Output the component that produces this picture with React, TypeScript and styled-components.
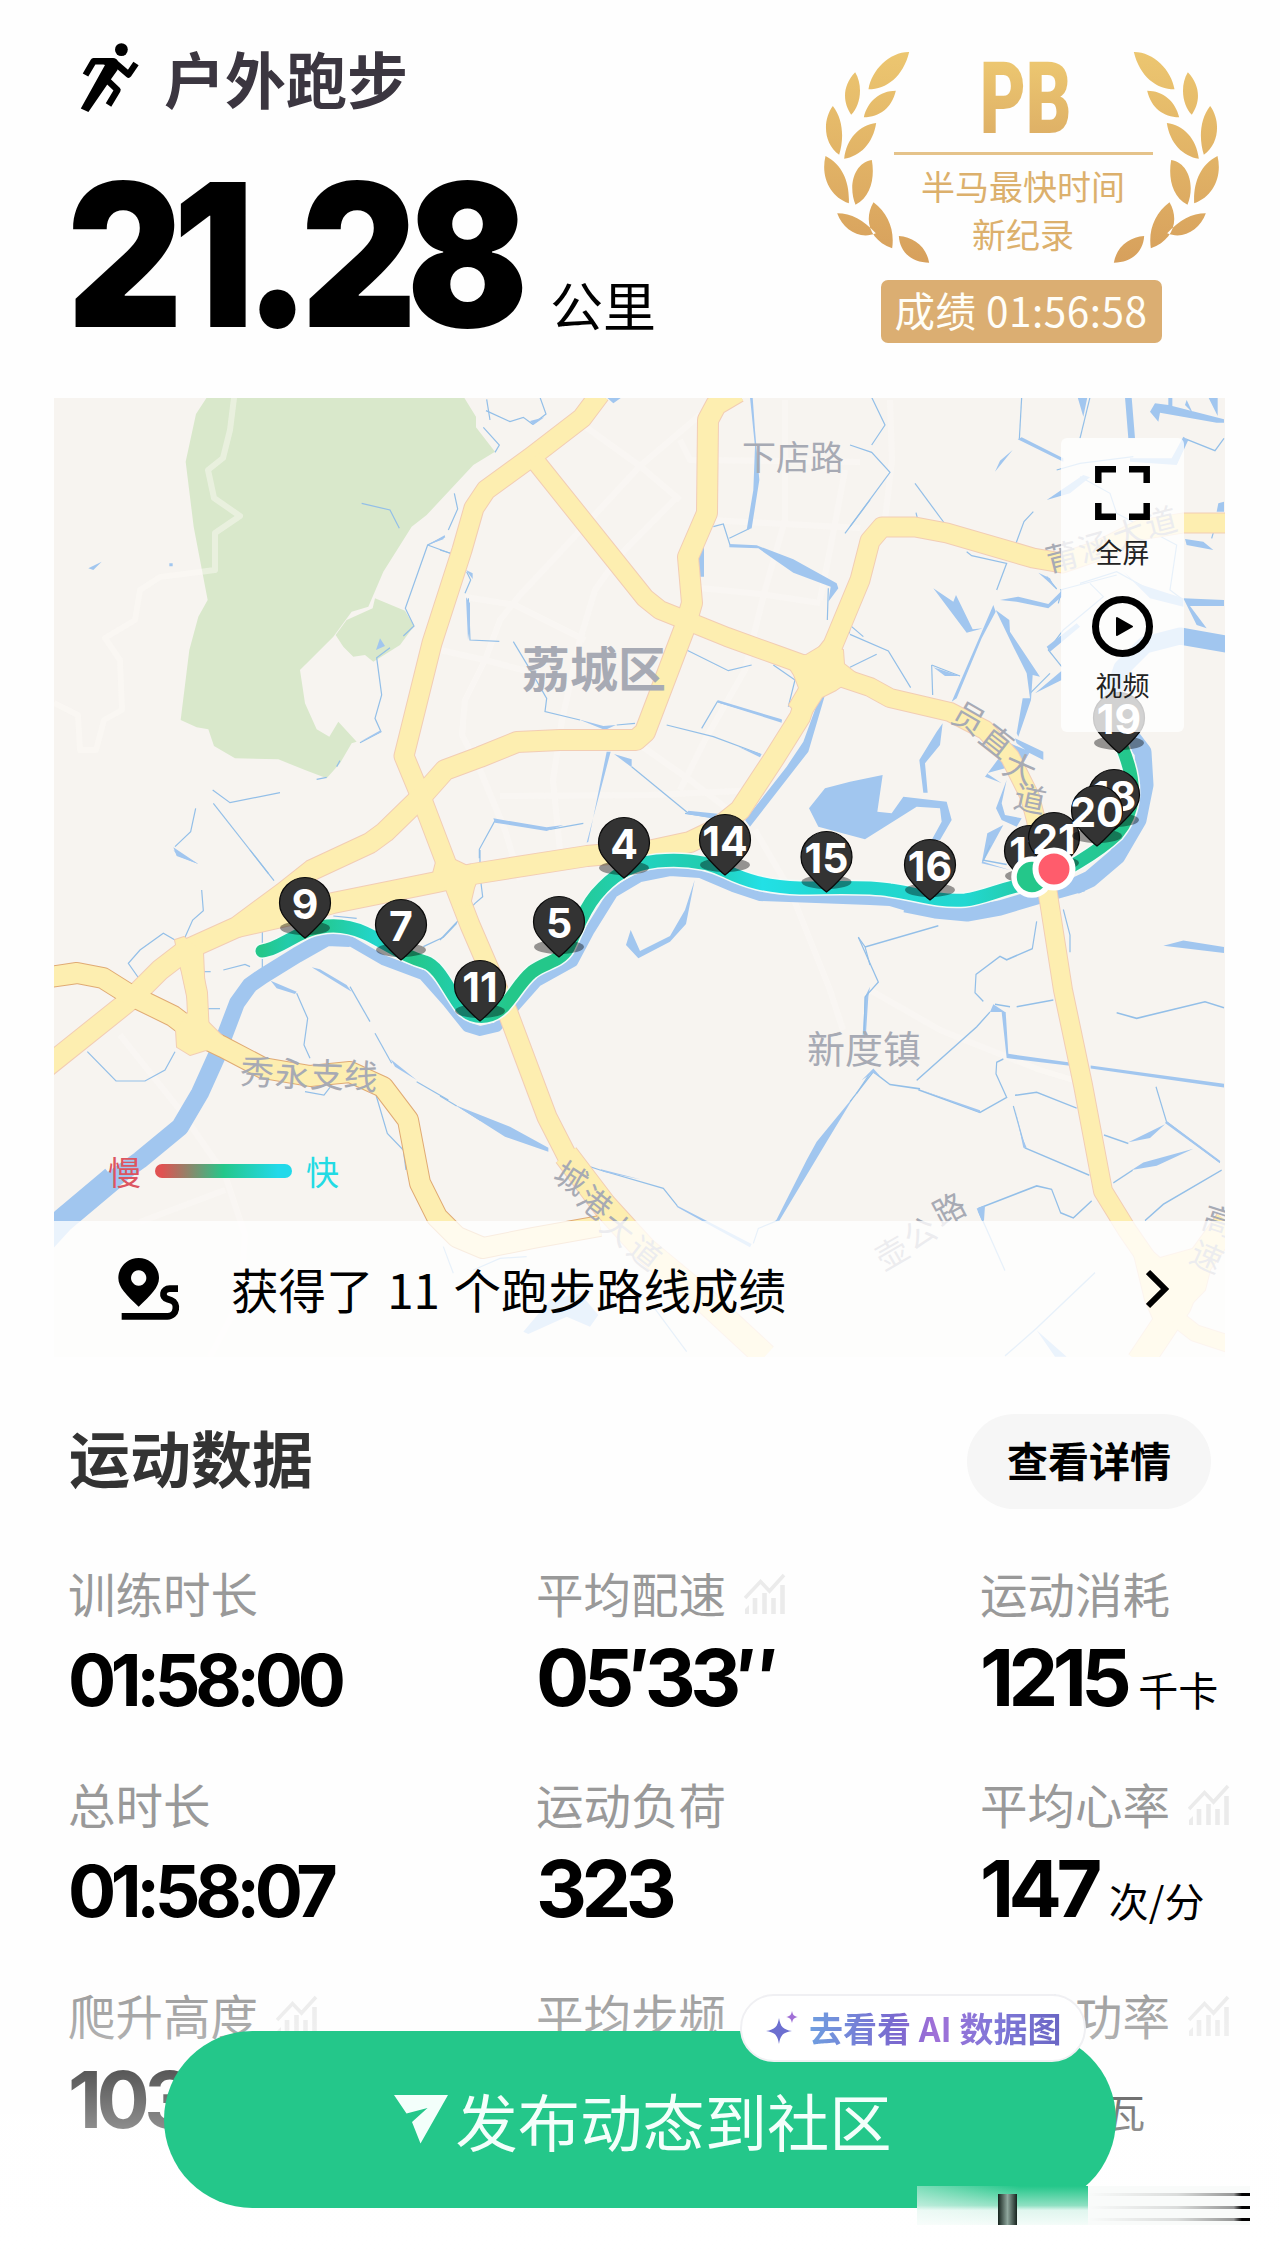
import React from 'react';
import styled, { createGlobalStyle } from 'styled-components';

const palette = {
  ink: '#000000',
  title: '#3b3640',
  heading: '#333333',
  label: '#999999',
  trend: '#ebebeb',
  green: '#24c78a',
  gold: '#dbae72',
  land: '#f7f4f0',
  park: '#d9e8cb',
  water: '#a1c6ef',
  creek: '#93bfe8',
  road: '#fdeeb0',
  roadEdge: '#f2cdb4',
  highwayEdge: '#e0aa74',
  street: '#fcfaf7',
  mapLabel: '#a7aab4',
  pin: '#333333',
};

const cjk = `'Noto Sans CJK SC', sans-serif`;
const digits = `Inter, 'Noto Sans CJK SC', sans-serif`;

/* ---------- map data ---------- */

const parks = [
  'M485 0L438 72L407 215L431 410L473 630L445 680L418 780L392 990L440 1012L475 1018L492 1068L555 1105L685 1108L765 1140L830 1165L870 1120L905 1060L920 1055L865 995L838 1040L800 1018L765 940L750 840L850 740L905 665L955 650L1000 545L1085 410L1130 375L1270 225L1335 185L1278 112L1278 80L1242 22V0Z',
  'M857 735L890 690L968 655L975 625L1065 662L1092 708L1050 765L970 815L945 795L910 800L880 770Z',
];

const roads = [
  { d: 'M600 394L582 418L530 458L486 490L474 508L462 550L432 643L404 756L421 797L448 868L470 925L508 1013L547 1117L570 1162', w: 19 },
  { d: 'M566 1155L604 1205L645 1250L697 1293L765 1356', w: 24 },
  { d: 'M45 1068L130 1000L160 970L186 950L237 927L283 893L312 870L370 843L385 832L421 797L445 770L480 757L517 742L560 740L636 740L645 732L685 627L692 603L688 557L707 513L708 420L716 405L738 392', w: 20 },
  { d: 'M533 458L645 598L660 610L685 620L727 637L777 655L813 668L870 687L890 698L950 712L985 730L1010 757L1030 797L1036 820L1047 888L1063 990L1083 1085L1103 1191L1127 1230L1165 1285', w: 18 },
  { d: 'M815 668L833 645L860 580L870 541L882 527L915 527L947 533L1033 558L1062 563L1100 550L1140 530L1183 523L1230 523', w: 19 },
  { d: 'M815 672L800 717L773 760L740 810L715 830L690 842L653 850L587 856L473 874L437 882L333 903L290 915L237 927', w: 20 },
  { d: 'M186 950L192 970L197 993L199 1035', w: 20 },
  { d: 'M1140 1362L1178 1305L1190 1275L1228 1222', w: 26 },
  { d: 'M1172 1315L1195 1333L1232 1345', w: 16 },
];

const highways = [
  { d: 'M50 977L77 973L103 978L130 995L173 1016L198 1035L223 1047L263 1068L310 1076L350 1072L383 1087L408 1120L420 1183L437 1217L457 1237L483 1248L533 1238L600 1226', w: 20 },
];

const junctions = [
  'M783 657L806 655L826 643L843 650L844 664L858 675L836 690L822 697L806 722L789 705L799 688L794 675Z',
  'M436 862L455 860L480 872L474 888L470 905L457 908L446 888L430 885Z',
  'M175 940L184 937L203 952L206 1020L222 1036L206 1050L190 1055L177 1047L176 1030L190 1010Z',
  'M1128 1230L1160 1258L1196 1248L1212 1262L1205 1290L1176 1320L1158 1330L1145 1300Z',
];

const streets = [
  'M235 390L230 430L223 458L208 470L214 498L240 516L215 533V570L160 577L140 590L135 620L105 638L120 660L122 710L104 720L96 750H80L78 715L54 703',
  'M583 425L640 466L680 500',
  'M700 415L640 466L590 520L520 595L500 620L485 660L465 700L462 735L480 770L505 830L520 880',
  'M676 498L620 555L595 590L580 640L562 720L553 780L560 850',
  'M680 440L690 460L860 462',
  'M785 400L785 520L765 590L745 670L705 740L680 790',
  'M845 470L830 550L820 600',
  'M710 520L860 528',
  'M465 597L515 605L585 640',
  'M440 650L485 660L560 680',
  'M500 796L650 795L760 790',
  'M640 745L690 780L735 815',
  'M700 588L760 594L820 603',
  'M120 1035L180 1110L225 1175L245 1235L240 1300L210 1357',
  'M225 1190L140 1222',
  'M755 830L790 890L830 990L843 1030',
  'M870 990L940 1030L1040 1070L1090 1085',
  'M890 400L892 460L885 520',
];

const rivers = [
  { d: 'M40 1245L63 1220L113 1178', w: 24 },
  { d: 'M105 1185L140 1160L180 1127L200 1093L218 1053', w: 18 },
  { d: 'M218 1053L237 1003L250 985L263 976L297 955L327 938L350 939', w: 16 },
  { d: 'M345 938L383 960L423 975L447 1002L467 1027L480 1031L497 1027L537 982L573 962L590 930L613 893L640 877L670 871L700 873L733 887L760 896L870 900L890 901L917 909', w: 10 },
  { d: 'M905 905L935 911L967 914L1000 908L1040 896L1083 884', w: 15 },
  { d: 'M1075 886L1090 879L1117 856L1138 820L1145 785L1143 752L1130 735L1115 715L1113 695L1122 668L1145 645L1180 636L1232 645', w: 17 },
];

// hairline creeks, grouped by map tile; each tile is drawn on a 3x grid
const creekTiles = [
  {
    origin: 'translate(50 390) scale(0.33333)',
    thin: [
      'M935 340L1020 360L1048 415', 'M1213 310L1223 357L1195 420', 'M1185 440L1133 465L1066 655L1092 708L1060 738',
      'M1133 465L1207 492', 'M1020 773L980 803L995 915L975 985L993 1025L930 1058', 'M870 1112L860 1130',
      'M488 1200L540 1238L690 1208', 'M490 1240L655 1450', 'M437 1255L422 1325L375 1370', 'M800 1168L830 1162',
      'M1310 28L1320 90',
    ],
    fill: [
      'M115 535L155 515L130 540Z', 'M370 1372L445 1422L380 1398Z', 'M978 780L990 745L1005 768Z',
      'M1133 465L1185 435L1180 448Z', 'M930 1055L993 1020L990 1028Z', 'M358 520H368V529H358Z',
    ],
  },
  {
    origin: 'translate(440 390) scale(0.33333)',
    thin: [
      'M138 62L210 95L250 82L278 103L318 72L300 22', 'M130 112L178 165L165 187', 'M75 610L92 570L80 545',
      'M85 625L90 750L178 754', 'M220 755L265 830L320 925L315 965L420 990', 'M0 480L38 492',
      'M530 1005L585 1000', 'M740 780L865 842L935 825', 'M680 1005L820 1040L960 1092', 'M785 1015L832 935L1025 992',
      'M820 410L850 402L870 465', 'M868 445L930 415', 'M118 1405V1378L165 1292', 'M330 1318L430 1300',
      'M1165 595L1162 690', 'M1290 330L1215 430', 'M1230 705L1228 730', 'M1000 825L1065 870L1045 950',
      'M735 1270L840 1285', 'M575 1130L745 1270',
    ],
    fill: [
      'M930 22L945 170L940 300L920 420L935 415L958 270L945 120L938 22Z', 'M868 462L950 466L1060 508L1190 580L1195 595L1165 635L1172 590L1060 548L955 475L868 472Z',
      'M792 460V560H780L775 500Z', 'M415 988L490 1008L528 1005L495 1020Z', 'M500 1085L445 1355L440 1358L512 1085Z',
      'M522 1092L575 1108V1132Z', 'M160 1285L320 1312L370 1305L320 1323L165 1298Z', 'M832 930L1025 988V998L835 938Z',
      'M78 622L90 640V712L84 750Z', 'M1140 918L1155 915L1105 1085L930 1310L915 1290L1040 1130L1090 1055Z',
      'M270 93L313 82L280 105Z', 'M895 1070L965 1092L960 1102Z', 'M78 540L98 550V567Z', 'M500 22L545 22L520 40Z',
      'M745 1262L840 1272L845 1290L740 1272Z',
    ],
  },
  {
    origin: 'translate(850 390) scale(0.33333)',
    thin: [
      'M65 22L105 105L65 165', 'M0 165L65 187L120 247L0 410', 'M195 280L285 402', 'M198 368L203 388', 'M550 365L522 395L498 460',
      'M350 485L365 497L470 520L440 600', 'M5 710L40 740', 'M0 733L115 783L182 893', 'M0 832L80 793', 'M245 825L248 915', 'M245 825L330 858',
      'M720 22L690 145', 'M515 22L508 148', 'M980 220L1010 148L1095 182L1122 145', 'M1090 428L1085 445', 'M690 260L780 310L800 370L980 465L960 600L1000 630',
      'M630 600L800 555', 'M720 580L760 620L640 720L595 780L635 830', 'M0 1235H10', 'M690 580L800 545L900 600', 'M620 240L690 220L850 200',
      'M540 910L600 850', 'M590 560L620 597', 'M635 600L625 640',
    ],
    fill: [
      'M683 22H712L700 80Z', 'M825 22H845L855 145H835Z', 'M503 148L515 142L640 205V215Z', 'M488 180L435 245L450 212Z',
      'M590 330L700 255L720 262L660 310Z', 'M900 65L915 40L955 45V22H967V48L1122 88V98H1100L930 68L925 95Z', 'M1075 22H1103V78Z', 'M1005 45L1010 30L1028 68Z',
      'M965 205L1000 140L1015 150L980 225L840 215V205Z', 'M1005 447L1060 455L1090 480L1010 465Z', 'M1122 335V365H1100L1105 340Z', 'M1000 625L1122 630V648H1020L1070 715L1040 705Z',
      'M250 595L310 635L318 615L368 718L400 715L350 728Z', 'M430 645L437 665L395 745L320 925L305 935Z', 'M437 660L478 690L480 725L570 860L548 855L543 930L505 1040L500 1030L518 925H540L530 850L490 770Z',
      'M450 630L505 620L595 642L635 602V620L595 655L500 635Z', 'M555 910L635 842V870Z', 'M565 548L600 565L615 595L600 580Z', 'M820 545L860 580L1000 625V650L900 625Z',
      'M590 770L680 700L690 710L600 785Z', 'M285 858L330 858L250 832Z', 'M208 1110L260 1025L278 1000L270 1065L225 1120L233 1208H220Z', 'M0 1175L98 1155L82 1265L125 1270L160 1220L290 1235L305 1290L270 1350H245L275 1295L270 1255L200 1250L45 1348L-95 1310L-123 1255L-75 1195Z',
      'M495 1045L580 1085V1110L540 1090L500 1060Z', 'M540 1085L520 1120L410 1150L455 1180L445 1175L405 1160L480 1060Z', 'M470 1170L455 1240L465 1275L515 1285L500 1310L455 1290L438 1255Z', 'M412 1330L460 1305L400 1415L480 1440L395 1420Z',
    ],
  },
  {
    origin: 'translate(50 850) scale(0.33333)',
    thin: [
      'M600 0L672 92', 'M455 120L460 182L428 210L405 262', 'M375 270L340 250L270 300L235 340L270 390', 'M637 235V360', 'M460 365H482', 'M520 360L585 343L600 350',
      'M470 476H510', 'M740 430L773 505L762 585L780 625', 'M975 550L1025 640', 'M1100 695L1195 750', 'M112 605L198 693H285L345 660L375 605', 'M10 595L30 600',
      'M978 735L1012 850L1060 900L1068 960', 'M765 725L822 735L840 712', 'M1220 220L1180 262L1120 290', 'M850 198L920 205', 'M900 410L960 515',
    ],
    fill: [
      'M370 0L445 42L385 18Z', 'M662 392L740 425L735 432L680 415Z', 'M785 352L810 358L890 405L905 425L880 410Z', 'M1022 628L1100 690L1035 650Z', 'M1220 768L1290 800V812Z',
    ],
  },
  {
    origin: 'translate(440 850) scale(0.33333)',
    thin: [
      'M0 270L45 222L105 160L128 140L120 75V0', 'M0 738L50 768', 'M420 940L480 960L670 1015L712 1068', 'M1290 670L1250 730', 'M1012 1112L955 1135L940 1180',
      'M1255 262L1275 290L1290 345', 'M100 1260L180 1225L260 1220', 'M640 1370L740 1505', 'M10 1190L40 1270',
    ],
    fill: [
      'M764 90L738 222L690 275L595 325L558 285L572 240L600 303L690 258L735 180Z', 'M45 765L210 830L325 893V905L195 860Z', 'M480 957L600 988L490 965Z', 'M708 1065L935 1182L930 1192L712 1072Z',
      'M1245 735L1160 875L1018 1112H1008L1100 930L1130 875Z', 'M250 1445L330 1350L420 1330L475 1395L450 1430L380 1400L265 1452Z', 'M1290 410L1275 440L1268 555L1278 550L1285 440Z',
    ],
  },
  {
    origin: 'translate(850 700) scale(0.33333 0.42735)',
    thin: [
      'M25 555L85 660L45 695L42 790', 'M45 578L265 528', 'M560 518L547 582L470 608L450 600L378 642L375 685L400 705', 'M640 490L660 550V590', 'M500 718L610 702',
      'M420 730L380 765L200 890', 'M435 712L480 718', 'M0 940L70 870L120 900L210 910', 'M205 912L390 965L470 930L438 875L440 848L460 840', 'M495 925L560 918L680 955',
      'M490 950L525 1048L718 1112', 'M762 1018L835 1038', 'M790 1130L848 1100', 'M918 905L950 988L1110 1082', 'M885 1218L940 1180L1115 1100', 'M385 1190L560 1137L605 1145L632 1200L670 1212L725 1172',
      'M800 732L860 745L1065 706L1122 720', 'M465 1535L560 1470L735 1340', 'M385 1195L465 1335', 'M470 385L400 375L420 340',
    ],
    fill: [
      'M940 575L1000 563L1122 578V592Z', 'M455 730H467L475 828L660 848V856L470 838Z', 'M722 855L1122 898V907L722 862Z', 'M835 1035L945 993L900 1025Z', 'M845 1100L880 1082L1030 1050L920 1090Z',
      'M515 1020L530 1048H520L495 955Z', 'M420 730L430 712L465 730Z', 'M380 1190L405 1183L402 1218H395Z', 'M950 985L1110 1078V1084L945 990Z', 'M205 910L390 960V966Z', 'M560 1475L650 1537H615Z',
      'M35 890L70 862L90 880L68 872Z',
    ],
  },
];

const route =
  'M262 951C275 950 290 938 307 931C325 924 345 924 365 933C385 942 400 955 425 962C440 967 448 990 462 1008C472 1019 490 1020 503 1007C515 994 520 982 532 972C545 962 560 962 568 948C576 932 582 912 596 895C612 876 630 864 657 861C680 859 705 860 728 872C745 880 765 887 800 888C830 888 865 886 890 890C915 893 935 902 965 900C985 898 1000 888 1035 882C1060 876 1100 850 1117 834C1135 812 1138 785 1122 747';

const pins = [
  { km: '9', x: 305, y: 903 },
  { km: '7', x: 401, y: 925 },
  { km: '5', x: 559, y: 922 },
  { km: '11', x: 480, y: 986 },
  { km: '4', x: 624, y: 843 },
  { km: '14', x: 725, y: 840 },
  { km: '15', x: 826.5, y: 857 },
  { km: '16', x: 930, y: 865 },
  { km: '17', x: 1030, y: 851 },
  { km: '21', x: 1054, y: 838 },
  { km: '18', x: 1114, y: 795 },
  { km: '20', x: 1097, y: 811 },
  { km: '19', x: 1119, y: 718 },
];

const mapLabels = [
  { text: '下店路', x: 793, y: 457, size: 34, angle: 0 },
  { text: '荔城区', x: 594, y: 669, size: 48, angle: 0, bold: true },
  { text: '新度镇', x: 864, y: 1049, size: 38, angle: 0 },
  { text: '秀', x: 257, y: 1072, size: 34, angle: 4 },
  { text: '永', x: 292, y: 1074, size: 34, angle: 4 },
  { text: '支', x: 327, y: 1075, size: 34, angle: 2 },
  { text: '线', x: 361, y: 1076, size: 34, angle: 6 },
  { text: '城', x: 571, y: 1178, size: 32, angle: 33 },
  { text: '港', x: 595, y: 1203, size: 32, angle: 38 },
  { text: '大', x: 618, y: 1229, size: 32, angle: 38 },
  { text: '道', x: 645, y: 1253, size: 32, angle: 38 },
  { text: '员', x: 969, y: 718, size: 32, angle: 30 },
  { text: '直', x: 997, y: 741, size: 32, angle: 38 },
  { text: '大', x: 1020, y: 768, size: 32, angle: 24 },
  { text: '道', x: 1030, y: 799, size: 32, angle: 12 },
  { text: '莆', x: 1062, y: 557, size: 32, angle: -14 },
  { text: '涵', x: 1094, y: 547, size: 32, angle: -16 },
  { text: '大', x: 1129, y: 534, size: 32, angle: -20 },
  { text: '道', x: 1161, y: 522, size: 32, angle: -14 },
  { text: '壶', x: 892, y: 1253, size: 32, angle: -30 },
  { text: '公', x: 920, y: 1233, size: 32, angle: -30 },
  { text: '路', x: 949, y: 1209, size: 32, angle: -28 },
  { text: '高', x: 1219, y: 1221, size: 32, angle: 18 },
  { text: '速', x: 1207, y: 1257, size: 32, angle: 24 },
];

/* ---------- icons ---------- */

const RunnerIcon = () => (
  <svg width='60' height='70' viewBox='0 0 60 70' fill='none' stroke='#000' strokeWidth='6.4' strokeLinejoin='round'>
    <ellipse cx='41.4' cy='6.6' rx='6.4' ry='6.4' fill='#000' stroke='none' />
    <path d='M13 15H33C38 15 39.500 20 37.500 27L29 39L8.400 69L.8 65.500L25 22Z' fill='#000' stroke='none' />
    <path d='M5.500 32L13.500 18.300H30' />
    <path d='M34 19L48.500 31.500L56 20.500' />
    <path d='M26 36L37.500 47L28.500 62' />
  </svg>
);

const TrendIcon = () => (
  <svg width='42' height='41' viewBox='0 0 42 41' fill='none' stroke={palette.trend}>
    <path d='M1 25L16.500 8.500L25.500 18L40 2' strokeWidth='3.600' />
    <path d='M11 41V25M20.500 41V20M29.500 41V25M38.500 41V12' strokeWidth='4.600' />
    <path d='M1 41V36L5 32V41Z' fill={palette.trend} stroke='none' />
  </svg>
);

const FullscreenIcon = () => (
  <svg width='55' height='54' viewBox='0 0 55 54' fill='none' stroke='#000' strokeWidth='6.500'>
    <path d='M21 3.300H3.300V17M34 3.300H51.700V17M21 50.700H3.300V37M34 50.700H51.700V37' />
  </svg>
);

const PlayIcon = () => (
  <svg width='61' height='61' viewBox='0 0 61 61'>
    <circle cx='30.500' cy='30.500' r='27' fill='none' stroke='#000' strokeWidth='7' />
    <path d='M25 22L40 30.500L25 39Z' stroke='#000' strokeWidth='2' strokeLinejoin='round' />
  </svg>
);

const RouteIcon = () => (
  <svg width='62' height='62' viewBox='204 1226 186 186'>
    <path
      fillRule='evenodd'
      d='M266 1226C300 1226 327 1253 327 1286C327 1314 302 1338 266 1372C230 1338 205 1314 205 1286C205 1253 232 1226 266 1226ZM266 1263a23 23 0 1 0 .1 0Z'
    />
    <path
      fill='none'
      stroke='#000'
      strokeWidth='20'
      d='M384 1318H359C337 1318 334 1344 352 1349L364 1353C385 1360 382 1401 352 1401H215'
    />
  </svg>
);

const ChevronIcon = () => (
  <svg width='24' height='40' viewBox='0 0 24 40' fill='none' stroke='#000' strokeWidth='6'>
    <path d='M2 3L19 20L2 37' />
  </svg>
);

const SendIcon = () => (
  <svg width='54' height='49' viewBox='0 0 54 49' fill='#f3fffb'>
    <path d='M0 0H54L26.500 48.500L18 27L33.500 13L12.500 18.500Z' />
  </svg>
);

const SparkleIcon = () => (
  <svg width='32' height='34' viewBox='0 0 32 34'>
    <path d='M13 7C14.500 16 17 18.500 26 20C17 21.500 14.500 24 13 33C11.500 24 9 21.500 0 20C9 18.500 11.500 16 13 7Z' fill='#6c6fd0' />
    <path d='M26 0C26.800 4 28 5.200 32 6C28 6.800 26.800 8 26 12C25.200 8 24 6.800 20 6C24 5.200 25.200 4 26 0Z' fill='#a06fd6' />
  </svg>
);

const laurel =
  'M388 96C330 95 275 150 266 208C320 208 370 170 388 96ZM226 157C185 200 190 250 214 284C240 260 252 200 226 157ZM348 212C300 212 262 245 252 292C300 290 335 265 348 212ZM159 258C128 300 130 370 178 404C192 360 192 300 159 258ZM289 309C240 315 200 355 193 416C240 410 280 370 289 309ZM137 408C122 470 150 530 207 550C210 490 190 435 137 408ZM276 420C220 430 205 500 227 554C275 530 285 470 276 420ZM281 547C250 600 270 660 337 685C345 630 325 580 281 547ZM172 580C215 580 250 600 288 640C240 660 190 630 172 580ZM357 648C400 650 440 680 448 728C400 728 360 700 357 648Z';

const Wreath = () => (
  <WreathSvg viewBox='130 90 1190 645'>
    <defs>
      <linearGradient id='gold' gradientUnits='userSpaceOnUse' x1='0' y1='96' x2='0' y2='728'>
        <stop offset='0' stopColor='#ecc670' />
        <stop offset='1' stopColor='#d7a05c' />
      </linearGradient>
    </defs>
    <path d={laurel} fill='url(#gold)' />
    <path d={laurel} fill='url(#gold)' transform='translate(1450 0) scale(-1 1)' />
  </WreathSvg>
);

/* ---------- map ---------- */

const RouteMap = () => (
  <MapSvg viewBox='54 398 1171 959'>
    <defs>
      <linearGradient id='pace' gradientUnits='userSpaceOnUse' x1='262' y1='0' x2='1140' y2='0'>
        <stop offset='0' stopColor='#24c78a' />
        <stop offset='.03' stopColor='#22ccab' />
        <stop offset='.06' stopColor='#24c78a' />
        <stop offset='.13' stopColor='#22d6cc' />
        <stop offset='.17' stopColor='#24c78a' />
        <stop offset='.23' stopColor='#22cfb0' />
        <stop offset='.28' stopColor='#24c78a' />
        <stop offset='.33' stopColor='#24c78a' />
        <stop offset='.44' stopColor='#22d2bd' />
        <stop offset='.5' stopColor='#22cdb0' />
        <stop offset='.57' stopColor='#22e0e6' />
        <stop offset='.66' stopColor='#22d6cc' />
        <stop offset='.8' stopColor='#22d8d2' />
        <stop offset='.88' stopColor='#24c9a0' />
        <stop offset='1' stopColor='#24c78a' />
      </linearGradient>
    </defs>
    <rect x='54' y='398' width='1171' height='959' fill={palette.land} />
    <g transform='translate(50 390) scale(0.33333)' fill={palette.park}>
      {parks.map((d) => (
        <path key={d} d={d} />
      ))}
    </g>
    <g fill='none' stroke={palette.street} strokeWidth='6' strokeLinejoin='round' opacity='.45'>
      {streets.map((d) => (
        <path key={d} d={d} />
      ))}
    </g>
    {creekTiles.map(({ origin, thin, fill }) => (
      <g key={origin} transform={origin}>
        <g fill='none' stroke={palette.creek} strokeWidth='3.6'>
          {thin.map((d) => (
            <path key={d} d={d} />
          ))}
        </g>
        <path d={fill.join('')} fill={palette.water} />
      </g>
    ))}
    <g fill='none' stroke={palette.water} strokeLinejoin='round'>
      {rivers.map(({ d, w }) => (
        <path key={d} d={d} strokeWidth={w} />
      ))}
    </g>
    <g fill='none' strokeLinejoin='round'>
      {roads.map(({ d, w }) => (
        <path key={d} d={d} strokeWidth={w + 2} stroke={palette.roadEdge} />
      ))}
      {highways.map(({ d, w }) => (
        <path key={d} d={d} strokeWidth={w + 2} stroke={palette.highwayEdge} />
      ))}
      {junctions.map((d) => (
        <path key={d} d={d} strokeWidth='2' stroke={palette.roadEdge} />
      ))}
      {[...roads, ...highways].map(({ d, w }) => (
        <path key={d} d={d} strokeWidth={w} stroke={palette.road} />
      ))}
    </g>
    <path d={junctions.join('')} fill={palette.road} />
    <g fontFamily={cjk} fill={palette.mapLabel} textAnchor='middle'>
      {mapLabels.map(({ text, x, y, size, angle, bold }) => (
        <text
          key={`${text}${x}`}
          fontSize={size}
          fontWeight={bold ? 700 : 400}
          transform={`translate(${x} ${y}) rotate(${angle})`}
          y={size * 0.37}
        >
          {text}
        </text>
      ))}
    </g>
    <g fill='none' strokeLinecap='round'>
      <path d={route} stroke='#f2fbf8' strokeWidth='16' />
      <path d={route} stroke='url(#pace)' strokeWidth='13' />
    </g>
    {pins.map(({ km, x, y }) => (
      <g key={km} transform={`translate(${x} ${y})`}>
        <ellipse cy='25' rx='25' ry='7' fill='#000' opacity='.4' />
        <path
          d='M0 35C-4 32 -11 25 -16 19.500C-22 13 -25.500 8 -25.500 0A25.500 25.500 0 0 1 25.500 0C25.500 8 22 13 16 19.500C11 25 4 32 0 35Z'
          fill={palette.pin}
          stroke='#0a0a0a'
          strokeWidth='1.200'
        />
        <text y='15.500' fontSize='41' fontWeight='700' fontFamily={digits} fill='#fff' textAnchor='middle'>
          {km}
        </text>
      </g>
    ))}
    <circle cx='1032' cy='877' r='18' fill={palette.green} stroke='#fff' strokeWidth='5.500' />
    <circle cx='1054' cy='869' r='18.500' fill='#ff5c6c' stroke='#fff' strokeWidth='6' />
  </MapSvg>
);

/* ---------- screen ---------- */

interface Stat {
  label: string;
  value: string;
  unit?: string;
  trend?: boolean;
  small?: boolean;
}

const stats: Stat[] = [
  { label: '训练时长', value: '01:58:00', small: true },
  { label: '平均配速', value: '05′33″', trend: true },
  { label: '运动消耗', value: '1215', unit: '千卡' },
  { label: '总时长', value: '01:58:07', small: true },
  { label: '运动负荷', value: '323' },
  { label: '平均心率', value: '147', unit: '次/分', trend: true },
  { label: '爬升高度', value: '103', unit: '米', trend: true },
  { label: '平均步频', value: '180' },
  { label: '平均功率', value: '217', unit: '瓦', trend: true },
];

const App = () => {
  return (
    <Page>
      <GlobalStyle />
      <Header>
        <Summary>
          <TitleRow>
            <RunnerIcon />
            <Title>户外跑步</Title>
          </TitleRow>
          <DistanceRow>
            <Distance>21.28</Distance>
            <DistanceUnit>公里</DistanceUnit>
          </DistanceRow>
        </Summary>
        <Badge>
          <Wreath />
          <BadgeMark>PB</BadgeMark>
          <BadgeRule />
          <BadgeText>半马最快时间</BadgeText>
          <BadgeText>新纪录</BadgeText>
          <BadgeTime>成绩 01:56:58</BadgeTime>
        </Badge>
      </Header>

      <MapCard>
        <RouteMap />
        <MapTools>
          <Tool>
            <FullscreenIcon />
            <span>全屏</span>
          </Tool>
          <Tool $tight>
            <PlayIcon />
            <span>视频</span>
          </Tool>
        </MapTools>
        <Legend>
          <LegendText $color='#dc5560'>慢</LegendText>
          <LegendBar />
          <LegendText $color='#22dbe4'>快</LegendText>
        </Legend>
        <RouteBar>
          <RouteIcon />
          <RouteText>获得了 11 个跑步路线成绩</RouteText>
          <ChevronIcon />
        </RouteBar>
      </MapCard>

      <SectionHeader>
        <SectionTitle>运动数据</SectionTitle>
        <DetailButton>查看详情</DetailButton>
      </SectionHeader>

      <StatGrid>
        {stats.map(({ label, value, unit, trend, small }) => (
          <div key={label}>
            <StatLabel>
              {label}
              {trend && <TrendIcon />}
            </StatLabel>
            <StatValue>
              <StatNumber $small={small}>{value}</StatNumber>
              {unit && <StatUnit>{unit}</StatUnit>}
            </StatValue>
          </div>
        ))}
      </StatGrid>

      <BottomFade />
      <PublishButton>
        <SendIcon />
        发布动态到社区
      </PublishButton>
      <AiPill>
        <SparkleIcon />
        <AiText>去看看 AI 数据图</AiText>
      </AiPill>
      <Smear>
        <SmearGreen />
        <SmearLines>
          <SmearLine />
          <SmearLine />
          <SmearLine />
        </SmearLines>
      </Smear>
    </Page>
  );
};

const GlobalStyle = createGlobalStyle`
  * {
    box-sizing: border-box;
  }

  body {
    margin: 0;
    background-color: #fefefe;
  }

  svg {
    display: block;
    flex-shrink: 0;
  }
`;

const Page = styled.div`
  position: relative;
  width: 1280px;
  height: 2252px;
  overflow: hidden;
  background-color: #fefefe;
  color: ${palette.ink};
  font-family: ${cjk};
`;

const Header = styled.header`
  display: flex;
  justify-content: space-between;
  height: 398px;
  padding: 42px 61px 0 67px;
`;

const Summary = styled.div`
  display: flex;
  flex-direction: column;
  gap: 66px;
`;

const TitleRow = styled.div`
  display: flex;
  align-items: center;
  gap: 24px;
  height: 72px;
  padding-left: 13px;
`;

const Title = styled.h1`
  margin: 0;
  font-size: 61px;
  font-weight: 700;
  line-height: 72px;
  color: ${palette.title};
`;

const DistanceRow = styled.div`
  display: flex;
  align-items: baseline;
  height: 150px;
`;

const Distance = styled.span`
  width: 483px;
  font-family: ${digits};
  font-size: 199px;
  font-weight: 900;
  line-height: 150px;
  letter-spacing: -11px;
  white-space: nowrap;
  transform: scaleX(0.9);
  transform-origin: left;
`;

const DistanceUnit = styled.span`
  font-size: 53px;
  line-height: 60px;
`;

const Badge = styled.div`
  position: relative;
  display: flex;
  flex-direction: column;
  align-items: center;
  width: 396px;
`;

const WreathSvg = styled.svg`
  position: absolute;
  top: 8px;
  left: 0;
  width: 397px;
  height: 215px;
`;

const BadgeMark = styled.div`
  height: 110px;
  margin-left: 8px;
  font-family: Roboto, sans-serif;
  font-size: 101px;
  font-weight: 900;
  line-height: 113px;
  background: linear-gradient(180deg, #ecc670 20%, #deb066 85%);
  background-clip: text;
  color: transparent;
  transform: scaleX(0.7);
`;

const BadgeRule = styled.div`
  width: 259px;
  height: 3px;
  margin-left: 5px;
  margin-bottom: 7px;
  background-color: #e5c38a;
`;

const BadgeText = styled.div`
  margin-left: 4px;
  font-size: 34px;
  line-height: 48px;
  color: #dcb06c;
`;

const BadgeTime = styled.div`
  margin-top: 22px;
  width: 281px;
  height: 63px;
  border-radius: 7px;
  background-color: ${palette.gold};
  color: #fffef8;
  font-size: 40.5px;
  line-height: 60px;
  letter-spacing: 0.5px;
  text-align: center;
  white-space: nowrap;
`;

const MapCard = styled.section`
  position: relative;
  width: 1171px;
  height: 959px;
  margin-left: 54px;
`;

const MapSvg = styled.svg`
  width: 1171px;
  height: 959px;
`;

const MapTools = styled.div`
  position: absolute;
  top: 40px;
  right: 41px;
  display: flex;
  flex-direction: column;
  gap: 24px;
  width: 123px;
  height: 294px;
  padding-top: 28px;
  border-radius: 6px;
  background-color: rgba(255, 255, 255, 0.78);
`;

const Tool = styled.div<{ $tight?: boolean }>`
  display: flex;
  flex-direction: column;
  align-items: center;
  gap: ${({ $tight }) => ($tight ? '8px' : '12px')};
  font-size: 27px;
  line-height: 40px;
  color: #222222;
`;

const Legend = styled.div`
  position: absolute;
  left: 54px;
  bottom: 162px;
  display: flex;
  align-items: center;
  gap: 14px;
`;

const LegendText = styled.span<{ $color: string }>`
  font-size: 33px;
  line-height: 48px;
  color: ${({ $color }) => $color};
`;

const LegendBar = styled.div`
  width: 137px;
  height: 14px;
  border-radius: 7px;
  background: linear-gradient(90deg, #e05252 5%, ${palette.green} 50%, #22d9ea 90%);
`;

const RouteBar = styled.div`
  position: absolute;
  left: 0;
  right: 0;
  bottom: 0;
  display: flex;
  align-items: center;
  height: 136px;
  padding: 0 55px 0 64px;
  background-color: rgba(255, 255, 255, 0.78);
`;

const RouteText = styled.span`
  flex: 1;
  margin-left: 51px;
  font-size: 47.5px;
  line-height: 60px;
  word-spacing: 3px;
  white-space: nowrap;
`;

const SectionHeader = styled.div`
  display: flex;
  justify-content: space-between;
  height: 95px;
  margin-top: 57px;
  padding: 0 69px 0 69px;
`;

const SectionTitle = styled.h2`
  margin: 0;
  font-size: 61px;
  font-weight: 700;
  line-height: 86px;
  color: ${palette.heading};
`;

const DetailButton = styled.button`
  width: 244px;
  height: 95px;
  padding: 0 0 5px;
  border: none;
  border-radius: 48px;
  background-color: #f6f6f6;
  color: ${palette.ink};
  font-family: inherit;
  font-size: 41px;
  font-weight: 700;
`;

const StatGrid = styled.div`
  display: grid;
  grid-template-columns: 468px 444px 1fr;
  row-gap: 43px;
  margin-top: 54px;
  padding-left: 68px;
`;

const StatLabel = styled.div`
  display: flex;
  align-items: center;
  gap: 18px;
  font-size: 47.5px;
  line-height: 60px;
  color: ${palette.label};
`;

const StatValue = styled.div`
  height: 108px;
  font-family: ${digits};
  font-size: 79px;
  line-height: 108px;
  white-space: nowrap;
`;

const StatNumber = styled.span<{ $small?: boolean }>`
  font-size: ${({ $small }) => ($small ? '71.5px' : '79px')};
  font-weight: 700;
  letter-spacing: ${({ $small }) => ($small ? '-0.075em' : '-0.07em')};
`;

const StatUnit = styled.span`
  margin-left: 12px;
  font-family: ${cjk};
  font-size: 40px;
  line-height: 1;
`;

const BottomFade = styled.div`
  position: absolute;
  left: 0;
  right: 0;
  bottom: 0;
  height: 276px;
  background: linear-gradient(rgba(255, 255, 255, 0), #ffffff);
`;

const PublishButton = styled.button`
  position: absolute;
  left: 164px;
  bottom: 44px;
  display: flex;
  align-items: center;
  justify-content: center;
  gap: 7px;
  width: 952px;
  height: 177px;
  padding: 0 0 0 6px;
  border: none;
  border-radius: 89px;
  background-color: ${palette.green};
  color: #f3fffb;
  font-family: inherit;
  font-size: 62.3px;
`;

const AiPill = styled.div`
  position: absolute;
  left: 740px;
  bottom: 190px;
  display: flex;
  align-items: center;
  gap: 11px;
  width: 346px;
  height: 68px;
  padding-left: 24px;
  border: 2px solid #f0f0f3;
  border-radius: 34px;
  background-color: #ffffff;
`;

const AiText = styled.span`
  background: linear-gradient(90deg, #6f9fe0, #7a68cf 35%, #a070d8 50%, #7f78d8 75%, #6a66c4);
  background-clip: text;
  color: transparent;
  font-size: 34px;
  font-weight: 700;
  line-height: 48px;
  white-space: nowrap;
`;

const Smear = styled.div`
  position: absolute;
  left: 917px;
  bottom: 27px;
  display: flex;
  width: 333px;
  height: 39px;
  background-color: #fefefe;
`;

const SmearGreen = styled.div`
  width: 171px;
  background:
    linear-gradient(90deg, #16241e, #8fa79d 50%, #16241e) 81px 8px / 19px 31px no-repeat,
    linear-gradient(90deg, rgba(255, 255, 255, 0.4), rgba(255, 255, 255, 0) 60%),
    linear-gradient(${palette.green}, #8fe0c2 50%, #dff6ee 62%, #f4fcf9);
`;

const SmearLines = styled.div`
  display: flex;
  flex: 1;
  flex-direction: column;
  justify-content: space-between;
  padding: 7px 0 4px;
  background-color: #f9fbfa;
`;

const SmearLine = styled.div`
  height: 3px;
  background: linear-gradient(90deg, rgba(0, 0, 0, 0), rgba(0, 0, 0, 0.12) 55%, rgba(0, 0, 0, 0.4) 90%, #000000 95%);
`;

export default App;
